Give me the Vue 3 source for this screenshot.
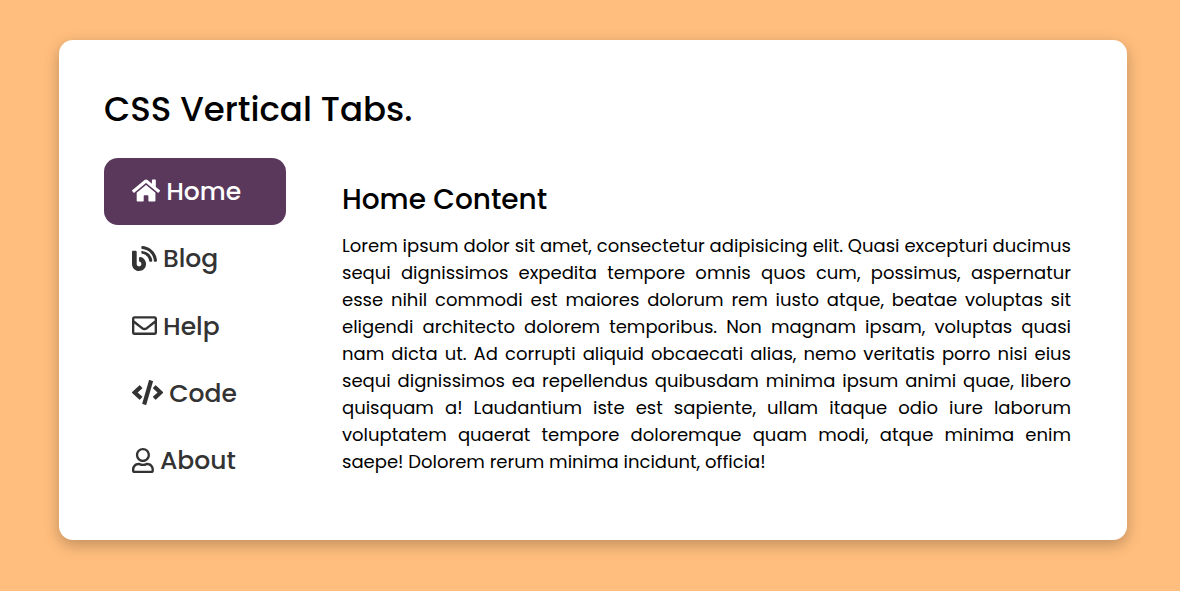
<script setup>
import { computed, ref } from 'vue'

const filler =
  'Lorem ipsum dolor sit amet, consectetur adipisicing elit. Quasi excepturi ducimus sequi dignissimos expedita tempore omnis quos cum, possimus, aspernatur esse nihil commodi est maiores dolorum rem iusto atque, beatae voluptas sit eligendi architecto dolorem temporibus. Non magnam ipsam, voluptas quasi nam dicta ut. Ad corrupti aliquid obcaecati alias, nemo veritatis porro nisi eius sequi dignissimos ea repellendus quibusdam minima ipsum animi quae, libero quisquam a! Laudantium iste est sapiente, ullam itaque odio iure laborum voluptatem quaerat tempore doloremque quam modi, atque minima enim saepe! Dolorem rerum minima incidunt, officia!'

const tabs = [
  {
    id: 'home',
    label: 'Home',
    box: '0 0 576 512',
    path: 'M280.37 148.26L96 300.11V464a16 16 0 0 0 16 16l112.06-.29a16 16 0 0 0 15.92-16V368a16 16 0 0 1 16-16h64a16 16 0 0 1 16 16v95.64a16 16 0 0 0 16 16.05L464 480a16 16 0 0 0 16-16V300L295.67 148.26a12.19 12.19 0 0 0-15.3 0zM571.6 251.47L488 182.56V44.05a12 12 0 0 0-12-12h-56a12 12 0 0 0-12 12v72.61L318.47 43a48 48 0 0 0-61 0L4.34 251.47a12 12 0 0 0-1.6 16.9l25.5 31A12 12 0 0 0 45.15 301l235.22-193.74a12.19 12.19 0 0 1 15.3 0L530.9 301a12 12 0 0 0 16.9-1.6l25.5-31a12 12 0 0 0-1.7-16.93z'
  },
  {
    id: 'blog',
    label: 'Blog',
    box: '0 0 512 512',
    path: 'M172.2 226.8c-14.6-2.9-28.2 8.9-28.2 23.8V301c0 10.2 7.1 18.4 16.7 22 18.2 6.8 31.3 24.4 31.3 45 0 26.5-21.5 48-48 48s-48-21.5-48-48V120c0-13.3-10.7-24-24-24H24c-13.3 0-24 10.7-24 24v248c0 89.5 82.1 160.2 175 140.7 54.4-11.4 98.3-55.4 109.7-109.7 17.4-82.9-37-157.2-112.5-172.2zM209 0c-9.2-.5-17 6.8-17 16v31.6c0 8.5 6.6 15.5 15 15.9 129.4 7 233.4 112 240.9 241.5.5 8.4 7.5 15 15.9 15h32.1c9.2 0 16.5-7.8 16-17C503.4 139.8 372.2 8.6 209 0zm.3 96c-9.3-.7-17.3 6.7-17.3 16.1v32.1c0 8.4 6.5 15.3 14.8 15.9 76.8 6.3 138 68.2 144.9 145.2.8 8.3 7.6 14.7 15.9 14.7h32.2c9.3 0 16.8-8 16.1-17.3-8.4-102.5-90.1-184.1-192.6-192.7z'
  },
  {
    id: 'help',
    label: 'Help',
    box: '0 0 512 512',
    path: 'M464 64H48C21.49 64 0 85.49 0 112v288c0 26.51 21.49 48 48 48h416c26.51 0 48-21.49 48-48V112c0-26.51-21.49-48-48-48zm0 48v40.805c-22.422 18.259-58.168 46.651-134.587 106.49-16.841 13.247-50.201 45.072-73.413 44.701-23.208.375-56.579-31.459-73.413-44.701C106.18 199.465 70.425 171.067 48 152.805V112h416zM48 400V214.398c22.914 18.251 55.409 43.862 104.938 82.646 21.857 17.205 60.134 55.186 103.062 54.955 42.717.231 80.509-37.199 103.053-54.947 49.528-38.783 82.032-64.401 104.947-82.653V400H48z'
  },
  {
    id: 'code',
    label: 'Code',
    box: '0 0 640 512',
    path: 'M278.9 511.5l-61-17.7c-6.4-1.8-10-8.5-8.2-14.9L346.2 8.7c1.8-6.4 8.5-10 14.9-8.2l61 17.7c6.4 1.8 10 8.5 8.2 14.9L293.8 503.3c-1.9 6.4-8.5 10.1-14.9 8.2zm-114-112.2l43.5-46.4c4.6-4.9 4.3-12.7-.8-17.2L117 256l90.6-79.7c5.1-4.5 5.5-12.3.8-17.2l-43.5-46.4c-4.5-4.8-12.1-5.1-17-.5L3.8 247.2c-5.1 4.7-5.1 12.8 0 17.5l144.1 135.1c4.9 4.6 12.5 4.4 17-.5zm327.2.6l144.1-135.1c5.1-4.7 5.1-12.8 0-17.5L492.1 112.1c-4.8-4.5-12.4-4.3-17 .5L431.6 159c-4.6 4.9-4.3 12.7.8 17.2L523 256l-90.6 79.7c-5.1 4.5-5.5 12.3-.8 17.2l43.5 46.4c4.5 4.9 12.1 5.1 17 .6z'
  },
  {
    id: 'about',
    label: 'About',
    box: '0 0 448 512',
    path: 'M313.6 304c-28.7 0-42.5 16-89.6 16-47.1 0-60.8-16-89.6-16C60.2 304 0 364.2 0 438.4V464c0 26.5 21.5 48 48 48h352c26.5 0 48-21.5 48-48v-25.6c0-74.2-60.2-134.4-134.4-134.4zM400 464H48v-25.6c0-47.6 38.8-86.4 86.4-86.4 14.6 0 38.3 16 89.6 16 51.7 0 74.9-16 89.6-16 47.6 0 86.4 38.8 86.4 86.4V464zM224 288c79.5 0 144-64.5 144-144S303.5 0 224 0 80 64.5 80 144s64.5 144 144 144zm0-240c52.9 0 96 43.1 96 96s-43.1 96-96 96-96-43.1-96-96 43.1-96 96-96z'
  }
]

const activeId = ref('home')
const active = computed(() => tabs.find((tab) => tab.id === activeId.value))
</script>

<template>
  <main class="card">
    <h1 class="title">CSS Vertical Tabs.</h1>
    <div class="layout">
      <div class="tabs" role="tablist" aria-orientation="vertical" aria-label="Sections">
        <button
          v-for="tab in tabs"
          :id="`tab-${tab.id}`"
          :key="tab.id"
          type="button"
          role="tab"
          class="tab"
          :class="{ active: tab.id === activeId }"
          :aria-selected="tab.id === activeId"
          aria-controls="panel"
          @click="activeId = tab.id"
        >
          <svg class="icon" :viewBox="tab.box" aria-hidden="true"><path :d="tab.path" /></svg>
          <span>{{ tab.label }}</span>
        </button>
      </div>
      <section id="panel" class="panel" role="tabpanel" :aria-labelledby="`tab-${active.id}`">
        <h2 class="heading">{{ active.label }} Content</h2>
        <p class="copy">{{ filler }}</p>
      </section>
    </div>
  </main>
</template>

<style>
body {
  background: #ffbe7d;
}
</style>

<style scoped>
.card {
  box-sizing: border-box;
  margin: 40px 53px 40px 59px;
  padding: 44px 45px 45px;
  border-radius: 14px;
  background: #fff;
  box-shadow: 0 5px 15px rgba(0, 0, 0, 0.25);
  color: #000;
  font-family: Poppins, Inter, sans-serif;
}

.title {
  margin: 0 0 24px;
  font-size: 34px;
  font-weight: 500;
  line-height: 50px;
}

.layout {
  display: flex;
}

.tabs {
  display: flex;
  flex: none;
  flex-direction: column;
  width: 182px;
}

.tab {
  display: flex;
  flex: 1;
  align-items: center;
  gap: 6px;
  box-sizing: border-box;
  padding: 14px 28px;
  border: 0;
  border-radius: 14px;
  background: none;
  color: #333;
  font: inherit;
  font-size: 25px;
  font-weight: 500;
  line-height: 38px;
  cursor: pointer;
}

.tab.active {
  background: #59385c;
  color: #fff;
}

.icon {
  flex: none;
  width: auto;
  height: 25px;
  margin-bottom: 2px;
  fill: currentColor;
}

.panel {
  flex: 1;
  min-width: 0;
  padding: 21px 11px 20px 56px;
}

.heading {
  margin: 0 0 11px;
  font-size: 28px;
  font-weight: 500;
  line-height: 42px;
}

.copy {
  margin: 0;
  font-size: 18px;
  line-height: 27px;
  text-align: justify;
}
</style>
